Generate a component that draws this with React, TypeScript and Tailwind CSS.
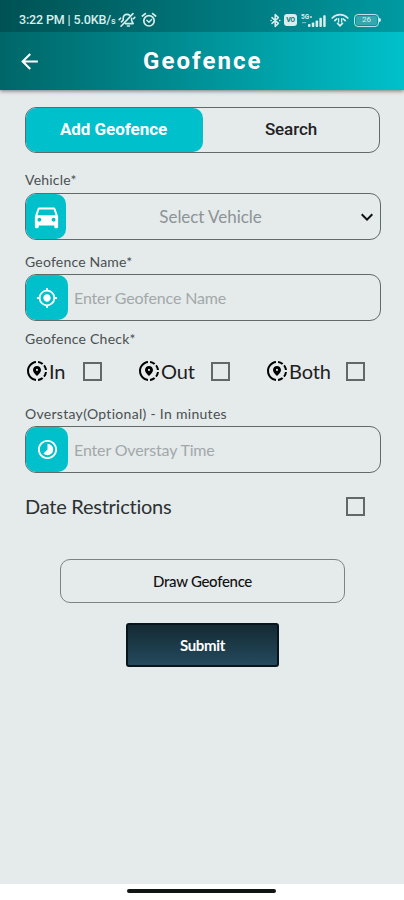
import React, { useState } from 'react'
import {
  MdArrowBack,
  MdDirectionsCar,
  MdKeyboardArrowDown,
  MdMyLocation,
  MdShareLocation,
  MdTimelapse
} from 'react-icons/md'

type Tab = 'add' | 'search'

function MutedBellIcon() {
  return (
    <svg width="18" height="16" viewBox="0 0 18 16" fill="none" stroke="currentColor" strokeWidth="1.6" strokeLinecap="round" strokeLinejoin="round">
      <path d="M3.4 9.8L5.2 8.2V6.2C5.2 3.8 6.8 2.4 9 2.4C10.3 2.4 11.2 2.8 12 3.5" />
      <path d="M13.6 6.2V8.6L15.2 11.6H7.2" />
      <path d="M9.4 14H11.4" />
      <path d="M3 14.2L15 1.6" />
      <path d="M1.2 7.6L2.6 6.2M15.4 6.8L16.8 5.4" />
    </svg>
  )
}

function AlarmIcon() {
  return (
    <svg width="16" height="16" viewBox="0 0 16 16" fill="none" stroke="currentColor" strokeWidth="1.7" strokeLinecap="round" strokeLinejoin="round">
      <circle cx="8" cy="8.8" r="5.2" />
      <path d="M1.4 4L4.4 1.6M14.6 4L11.6 1.6" />
      <path d="M5.8 8.2L8 10.2L10.6 7.6" strokeWidth="1.4" />
    </svg>
  )
}

function BluetoothIcon() {
  return (
    <svg width="11" height="15" viewBox="0 0 11 15" fill="none" stroke="currentColor" strokeWidth="1.5" strokeLinecap="round" strokeLinejoin="round">
      <path d="M2 4.6L8.4 10.4L5.2 13.4V1.6L8.4 4.6L2 10.4" />
      <path d="M1 7.5H1.2M9.6 7.5H9.8" />
    </svg>
  )
}

function SignalIcon() {
  return (
    <svg width="26" height="15" viewBox="0 0 26 15" fill="currentColor">
      <text x="0" y="6" fontSize="6.5" fontFamily="Roboto, sans-serif" fontWeight="700">5G</text>
      <circle cx="10" cy="4" r="0.9" />
      <rect x="1" y="9" width="4" height="1.2" opacity="0.5" />
      <rect x="7" y="11" width="2.5" height="3" rx="0.8" />
      <rect x="10.8" y="9.4" width="2.5" height="4.6" rx="0.8" />
      <rect x="14.6" y="7.4" width="2.5" height="6.6" rx="0.8" />
      <rect x="18.4" y="4.8" width="2.5" height="9.2" rx="0.8" />
      <rect x="22.2" y="2.2" width="2.5" height="11.8" rx="0.8" />
    </svg>
  )
}

function WifiIcon() {
  return (
    <svg width="18" height="14" viewBox="0 0 18 14" fill="none" stroke="currentColor" strokeWidth="1.7" strokeLinecap="round">
      <path d="M1.2 5C5.6 0.6 12.4 0.6 16.8 5" />
      <path d="M3.8 7.6C4.6 6.7 5 6.3 5.8 5.9M14.2 7.6C13.4 6.7 13 6.3 12.2 5.9" />
      <path d="M7.6 9V5.6M10.6 5.6V9" strokeWidth="1.3" />
      <path d="M6.6 10.4L9 12.8L11.4 10.4" />
    </svg>
  )
}

function StatusBar() {
  return (
    <div className="flex h-8 items-start justify-between bg-black/20 pl-[19px] pr-[23px] pt-[11px] text-[#d9eded]">
      <div className="flex h-[18px] items-center">
        <span className="w-[98px] whitespace-nowrap text-[12.5px] font-medium tracking-[-0.15px]">
          3:22 PM | 5.0KB/<span className="text-[9px]">s</span>
        </span>
        <div className="ml-px"><MutedBellIcon /></div>
        <div className="ml-[5px]"><AlarmIcon /></div>
      </div>
      <div className="flex h-[18px] items-center">
        <BluetoothIcon />
        <div className="ml-[3px] flex h-3 w-[13px] items-center justify-center rounded-[3px] bg-[#d9eded]">
          <span className="text-[7px] font-bold leading-none tracking-tighter text-[#08787c]">VO</span>
        </div>
        <div className="ml-1"><SignalIcon /></div>
        <div className="ml-1"><WifiIcon /></div>
        <div className="ml-[5px] flex h-[13px] w-[25px] items-center rounded-[4px] border-[1.5px] border-[#bfe3e4] p-px">
          <div className="flex h-full w-full items-center justify-center rounded-xs bg-white/20 text-[8px] leading-none">26</div>
        </div>
        <div className="h-1 w-0.5 rounded-r-sm bg-[#d9eded]" />
      </div>
    </div>
  )
}

interface CheckboxProps {
  label: string
  checked: boolean
  onChange: (checked: boolean) => void
}

function Checkbox({ label, checked, onChange }: CheckboxProps) {
  return (
    <input
      type="checkbox"
      aria-label={label}
      checked={checked}
      onChange={(e) => onChange(e.target.checked)}
      className="h-[19px] w-[19px] shrink-0 appearance-none border-2 border-[#626868] checked:bg-[#00c1cb]"
    />
  )
}

interface FieldProps {
  icon: React.ReactNode
  children: React.ReactNode
}

function Field({ icon, children }: FieldProps) {
  return (
    <div className="flex h-[47px] items-center rounded-[11px] border border-[#626969]">
      {icon}
      {children}
    </div>
  )
}

const iconClass = 'flex h-[45px] w-[42px] shrink-0 items-center justify-center rounded-[10px] bg-[#00c1cb] text-white'
const inputClass = 'min-w-0 flex-1 bg-transparent pl-1.5 pr-3 text-[16px] tracking-[-0.14px] text-[#333] outline-none placeholder:text-[#a2a8a9]'
const labelClass = 'block h-5 whitespace-nowrap text-[14px] leading-5 text-[#4a5051]'

export default function App() {
  const [tab, setTab] = useState<Tab>('add')
  const [name, setName] = useState('')
  const [overstay, setOverstay] = useState('')
  const [restricted, setRestricted] = useState(false)
  const [checks, setChecks] = useState({ In: false, Out: false, Both: false })

  const renderCheck = (key: 'In' | 'Out' | 'Both') => (
    <div className="flex items-center">
      <MdShareLocation className="h-6 w-6 shrink-0 text-black" />
      <span className="flex-1 text-[20px] leading-6 tracking-[-0.1px] text-[#1d2020]">{key}</span>
      <Checkbox label={key} checked={checks[key]} onChange={(value) => setChecks({ ...checks, [key]: value })} />
    </div>
  )

  return (
    <div className="flex h-[900px] w-[404px] flex-col bg-white font-['Lato',sans-serif] [font-variant-ligatures:none]">
      <header className="relative shrink-0 bg-linear-to-r from-[#006668] to-[#00c1cb] font-['Roboto',sans-serif] shadow-[0_1px_4px_rgba(0,0,0,0.5)]">
        <StatusBar />
        <div className="flex h-[58px] items-center pl-[17px] text-white">
          <button aria-label="Back">
            <MdArrowBack className="h-[25px] w-[25px]" />
          </button>
          <h1 className="ml-[101px] text-[24px] font-bold tracking-[2.05px]">Geofence</h1>
        </div>
      </header>

      <main className="flex-1 bg-[#e5eaeb] px-[25px] pt-[17px]">
        <div className="flex h-[46px] w-[355px] rounded-[11px] border border-[#626969] font-['Roboto',sans-serif] text-[17px]">
          <button
            onClick={() => setTab('add')}
            className={`h-full w-[177px] rounded-[10px] pr-0.5 font-bold tracking-[-0.05px] ${tab === 'add' ? 'bg-[#00c1cb] text-white' : 'text-[#222]'}`}
          >
            Add Geofence
          </button>
          <button
            onClick={() => setTab('search')}
            className={`h-full flex-1 rounded-[10px] font-medium tracking-[-0.1px] ${tab === 'search' ? 'bg-[#00c1cb] text-white' : 'text-[#222]'}`}
          >
            Search
          </button>
        </div>

        <div className="w-[356px] pt-[17px]">
          <label className={`tracking-[0.2px] ${labelClass}`}>Vehicle*</label>
          <div className="pt-[3px]">
            <Field icon={<div className={`${iconClass} max-w-10`}><MdDirectionsCar className="h-[31px] w-[31px] shrink-0" /></div>}>
              <button className="flex flex-1 items-center pr-px text-[17px] tracking-[-0.05px] text-[#8d9495]">
                <span className="flex-1 text-center">Select Vehicle</span>
                <MdKeyboardArrowDown className="h-6 w-6 text-[#111]" />
              </button>
            </Field>
          </div>

          <label className={`mt-3 tracking-[0.2px] ${labelClass}`}>Geofence Name*</label>
          <div className="pt-0.5">
            <Field icon={<div className={iconClass}><MdMyLocation className="h-[22px] w-[22px]" /></div>}>
              <input className={inputClass} value={name} onChange={(e) => setName(e.target.value)} placeholder="Enter Geofence Name" />
            </Field>
          </div>

          <p className={`mt-2 tracking-[0.25px] ${labelClass}`}>Geofence Check*</p>
          <div className="mt-2.5 grid h-6 grid-cols-[77px_93px_100px] gap-x-[35px]">
            {renderCheck('In')}
            {renderCheck('Out')}
            {renderCheck('Both')}
          </div>

          <label className={`mt-[21px] tracking-[0.3px] ${labelClass}`}>Overstay(Optional) - In minutes</label>
          <div className="pt-0.5">
            <Field icon={<div className={iconClass}><MdTimelapse className="h-[23px] w-[23px]" /></div>}>
              <input className={inputClass} value={overstay} onChange={(e) => setOverstay(e.target.value)} placeholder="Enter Overstay Time" />
            </Field>
          </div>

          <div className="mt-[21px] flex h-6 items-center justify-between pr-4">
            <span className="text-[20px] leading-6 tracking-[-0.25px] text-[#2c3132]">Date Restrictions</span>
            <Checkbox label="Date Restrictions" checked={restricted} onChange={setRestricted} />
          </div>
        </div>

        <div className="mt-[41px] flex w-[355px] flex-col items-center gap-5">
          <button className="h-11 w-[285px] rounded-[10px] border border-[#7d8384] pt-px text-[15px] font-medium tracking-[-0.3px] text-[#111]">
            Draw Geofence
          </button>
          <button className="h-11 w-[153px] rounded-[3px] border-2 border-[#07151c] bg-linear-to-b from-[#142a34] to-[#244a5d] text-[15px] font-bold tracking-[-0.3px] text-white">
            Submit
          </button>
        </div>
      </main>

      <footer className="flex h-4 shrink-0 justify-center bg-white pt-[5px] pr-px">
        <div className="h-1 w-[149px] rounded-full bg-[#111615]" />
      </footer>
    </div>
  )
}
